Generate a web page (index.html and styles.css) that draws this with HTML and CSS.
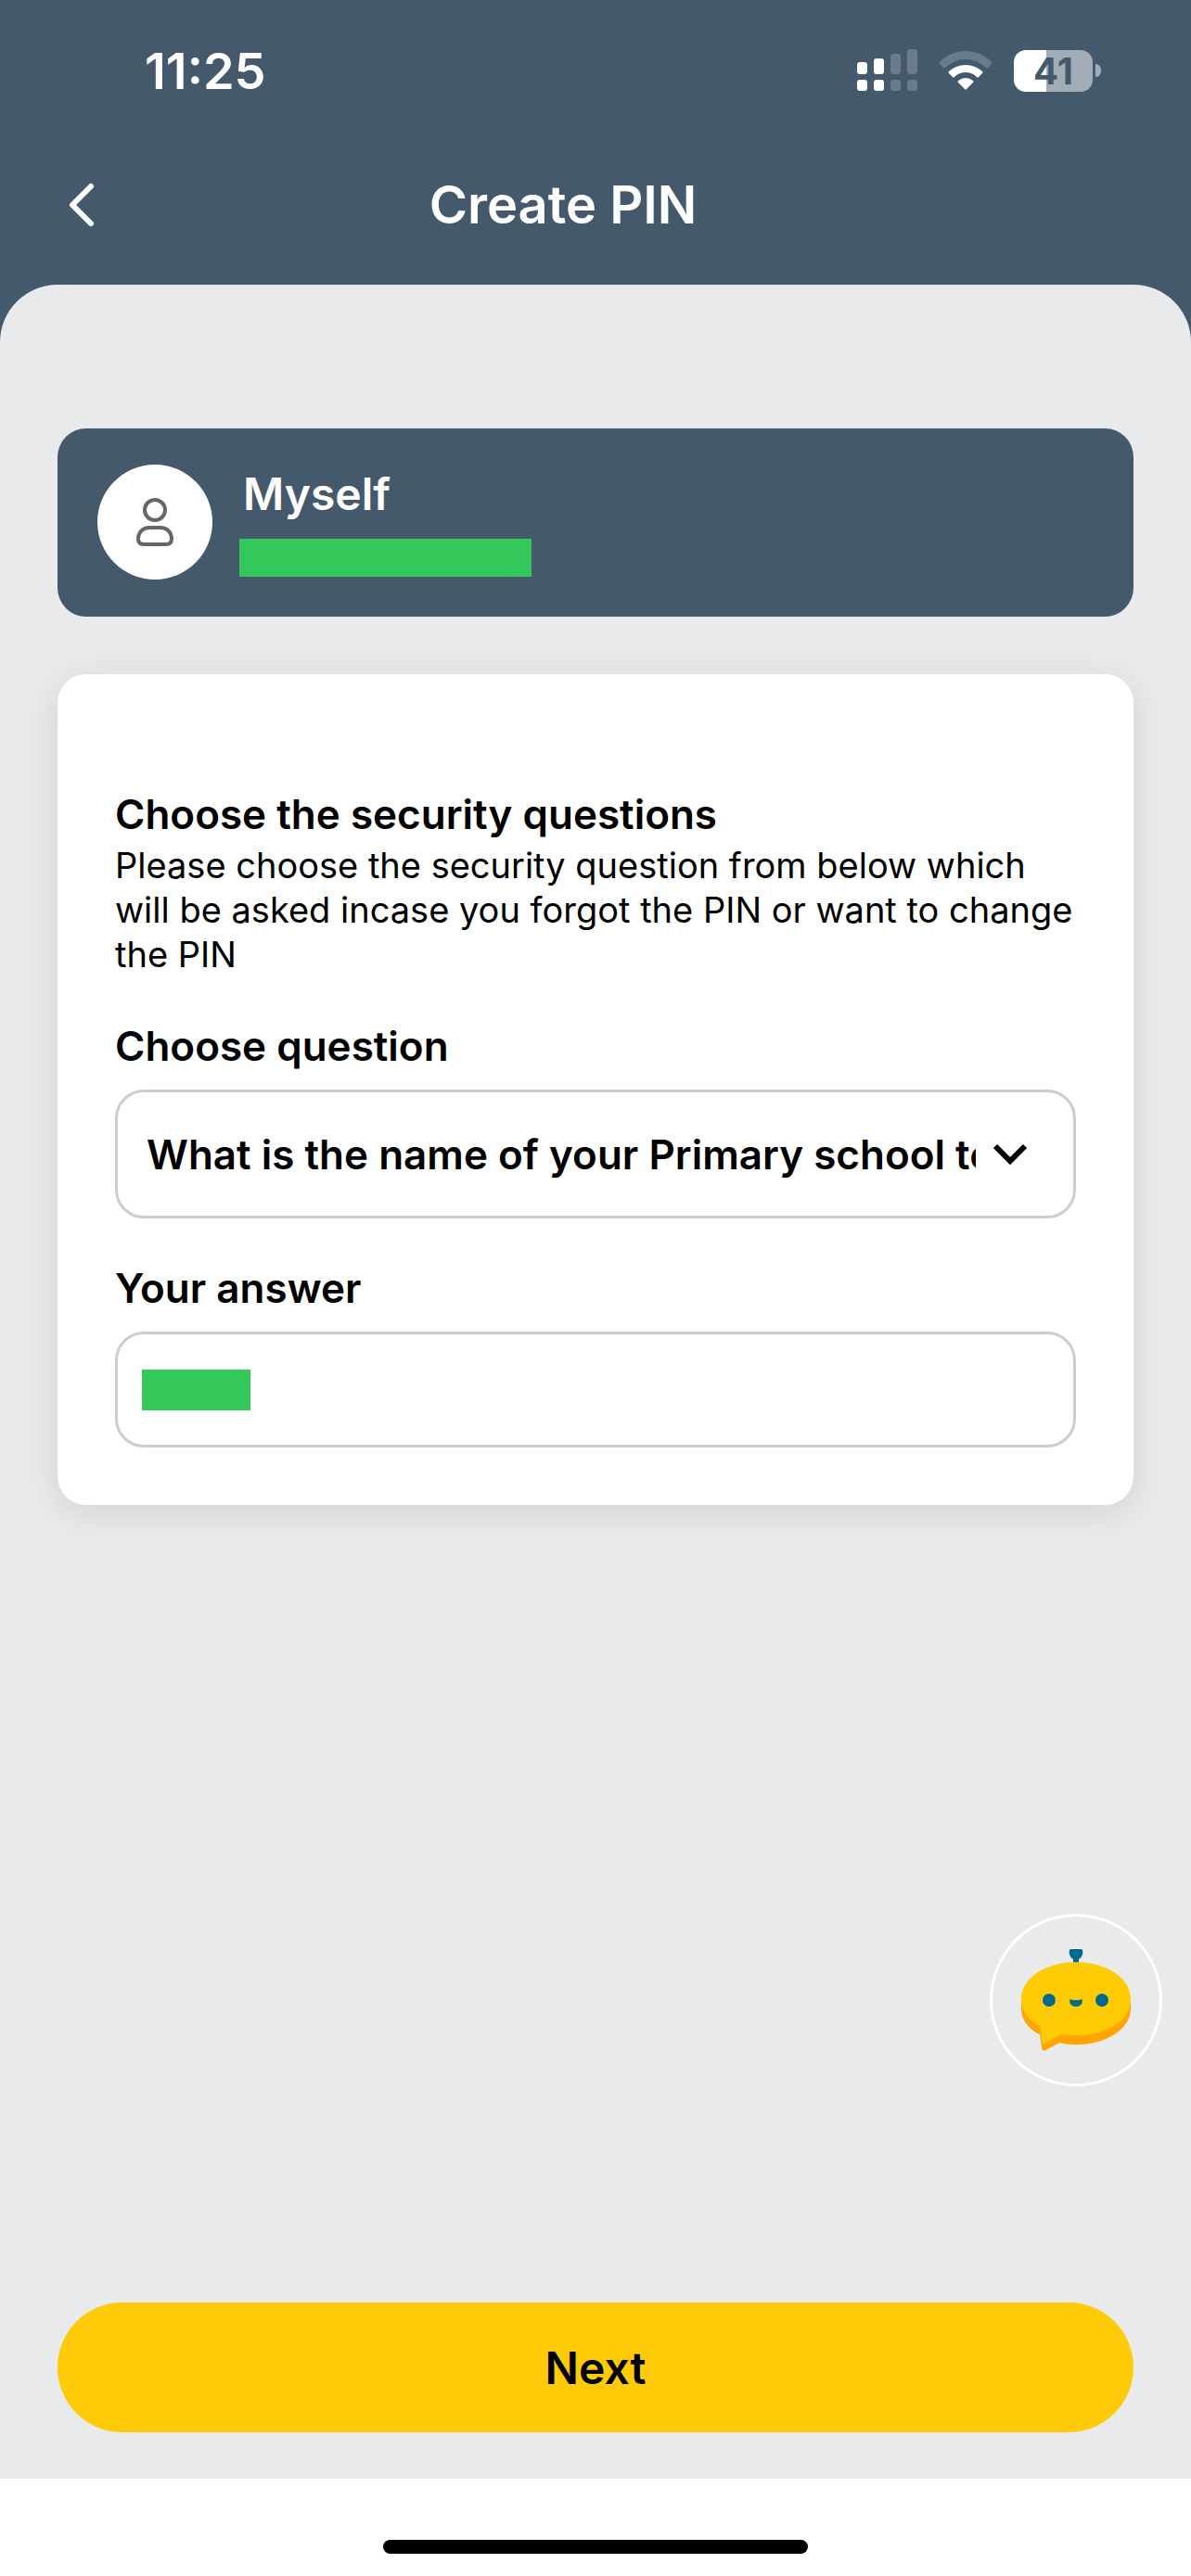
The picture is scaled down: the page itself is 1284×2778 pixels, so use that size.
FILE: index.html
```html
<!DOCTYPE html>
<html lang="en">
<head>
<meta charset="utf-8">
<meta name="viewport" content="width=device-width, initial-scale=1">
<title>Create PIN</title>
<link rel="stylesheet" href="styles.css">
</head>
<body>
<div class="app">
  <header class="top">
    <div class="status">
      <span class="status-time">11:25</span>
      <div class="status-icons">
        <svg class="signal" viewBox="0 0 65 46" aria-hidden="true">
          <g fill="#fff">
            <rect x="0" y="14" width="11" height="13" rx="3"/><rect x="0" y="33" width="11" height="12" rx="3"/>
            <rect x="18" y="10" width="11" height="17" rx="3"/><rect x="18" y="33" width="11" height="12" rx="3"/>
          </g>
          <g fill="#6a7b8c">
            <rect x="36" y="5" width="11" height="22" rx="3"/><rect x="36" y="33" width="11" height="12" rx="3"/>
            <rect x="54" y="0" width="11" height="27" rx="3"/><rect x="54" y="33" width="11" height="12" rx="3"/>
          </g>
        </svg>
        <svg class="wifi" viewBox="0 0 58 44" aria-hidden="true">
          <path fill="#6a7b8c" d="M1 13Q13 1 29 1T57 13Q58 14 57 15L53 19Q52 20 51 19Q41 10 29 10T7 19Q6 20 5 19L1 15Q0 14 1 13Z"/>
          <path fill="#fff" d="M11 23Q19 16 29 16T47 23Q48 24 47 25L43 29Q42 30 41 29Q36 24 29 24T17 29Q16 30 15 29L11 25Q10 24 11 23Z"/>
          <path fill="#fff" d="M21 33Q25 30 29 30T37 33Q38 34 37 35L30 42Q29 43 28 42L21 35Q20 34 21 33Z"/>
        </svg>
        <div class="battery">
          <span class="battery-body">41</span>
          <span class="battery-tip"></span>
        </div>
      </div>
    </div>
    <nav class="bar">
      <button class="back" type="button" aria-label="Back">
        <svg viewBox="0 0 28 48" aria-hidden="true"><path d="M24 4L4 24L24 44" fill="none" stroke="#fff" stroke-width="6" stroke-linecap="round" stroke-linejoin="round"/></svg>
      </button>
      <h1 class="title">Create PIN</h1>
    </nav>
  </header>

  <main class="panel">
    <section class="profile">
      <span class="avatar">
        <svg viewBox="0 0 40 54" aria-hidden="true"><g fill="none" stroke="#63666a" stroke-width="4"><circle cx="20" cy="14" r="11"/><path d="M14 33H26C33 33 38 38 38 45Q38 51 32 51H8Q2 51 2 45C2 38 7 33 14 33Z"/></g></svg>
      </span>
      <div class="profile-text">
        <h2 class="profile-name">Myself</h2>
        <span class="mask mask-number"></span>
      </div>
    </section>

    <form class="card" id="pin-form">
      <div class="intro">
        <h2 class="label">Choose the security questions</h2>
        <p class="hint">Please choose the security question from below which will be asked incase you forgot the PIN or want to change the PIN</p>
      </div>
      <div class="field">
        <label class="label" for="question">Choose question</label>
        <div class="control">
          <select class="box select" id="question">
            <option>What is the name of your Primary school teacher?</option>
          </select>
          <svg class="chevron" viewBox="0 0 38 24" aria-hidden="true"><path d="M3 3L19 19L35 3" fill="none" stroke="#000" stroke-width="6"/></svg>
        </div>
      </div>
      <div class="field">
        <label class="label" for="answer">Your answer</label>
        <div class="control">
          <input class="box input" id="answer" type="text">
          <span class="mask mask-answer"></span>
        </div>
      </div>
    </form>

    <button class="next" type="submit" form="pin-form">Next</button>
  </main>

  <footer class="home"><span class="home-bar"></span></footer>

  <button class="bot" type="button" aria-label="Chat assistant">
    <svg viewBox="0 0 118 110" aria-hidden="true">
      <path fill="#006a8e" d="M53 0H65Q67 1 66 6Q65 9 62 11V15H56V11Q53 9 52 6Q51 1 53 0Z"/>
      <path fill="#ffa400" d="M0 54H118V64C118 86 92 103 59 103Q49 103 41 101L26 109Q22 110 22 106L20 92C7 86 0 75 0 64Z"/>
      <path fill="#ffcb05" d="M59 14C92 14 118 31 118 54S92 93 59 93Q50 93 43 92L23 103L20 83C7 76 0 66 0 54C0 31 26 14 59 14Z"/>
      <g fill="#006a8e"><circle cx="30" cy="55" r="7"/><circle cx="87" cy="55" r="7"/><path d="M52 54Q59 56 66 54Q66 62 59 62T52 54Z"/></g>
    </svg>
  </button>
</div>
</body>
</html>
```
FILE: styles.css
```css
* { box-sizing: border-box; margin: 0; }

body {
  font-family: Inter, "Noto Sans", sans-serif;
  color: #000;
  background: #fff;
}

button, input, select { font: inherit; color: inherit; }

.app {
  min-height: 100vh;
  display: flex;
  flex-direction: column;
  background: #45596d;
}

.status {
  display: flex;
  justify-content: space-between;
  align-items: center;
  height: 152px;
  padding: 0 97px 0 156px;
  color: #fff;
}
.status-time { padding-top: 2px; font-size: 54px; line-height: 60px; font-weight: 600; }
.status-icons { display: flex; align-items: center; gap: 23px; }
.signal { width: 65px; height: 46px; }
.wifi { width: 58px; height: 44px; }
.battery { display: flex; align-items: center; gap: 3px; }
.battery-body {
  width: 85px;
  height: 45px;
  border-radius: 13px;
  background: linear-gradient(90deg, #fff 41%, #a2acb6 41%);
  color: #45596d;
  font-size: 40px;
  line-height: 45px;
  font-weight: 700;
  text-align: center;
}
.battery-tip { width: 6px; height: 14px; border-radius: 0 6px 6px 0; background: #a2acb6; }

.bar {
  display: grid;
  grid-template-columns: 76px 1fr 76px;
  align-items: center;
  height: 155px;
  padding: 0 132px 18px 62px;
}
.back {
  display: flex;
  padding: 0 12px;
  border: 0;
  background: none;
}
.back svg { width: 28px; height: 48px; }
.title { color: #fff; font-size: 56px; line-height: 64px; font-weight: 600; text-align: center; }

.panel {
  flex: 1;
  display: flex;
  flex-direction: column;
  gap: 62px;
  padding: 155px 62px 50px;
  border-radius: 62px 62px 0 0;
  background: #e8eaeb;
}

.profile {
  display: flex;
  align-items: center;
  gap: 29px;
  padding: 39px 43px 40px;
  border-radius: 31px;
  background: #45596d;
}
.avatar {
  display: flex;
  align-items: center;
  justify-content: center;
  width: 124px;
  height: 124px;
  border-radius: 50%;
  background: #fff;
}
.avatar svg { width: 40px; height: 54px; }
.profile-text { display: flex; flex-direction: column; gap: 20px; }
.profile-name { padding-left: 4px; color: #fff; font-size: 48px; line-height: 56px; font-weight: 600; }
.mask { display: block; background: #34c759; }
.mask-number { width: 315px; height: 41px; }

.card {
  display: flex;
  flex-direction: column;
  gap: 50px;
  padding: 126px 62px 62px;
  border-radius: 31px;
  background: #fff;
  box-shadow: 0 8px 40px rgba(0, 0, 0, 0.1);
}
.label { display: block; font-size: 44px; line-height: 50px; font-weight: 600; }
.intro { display: flex; flex-direction: column; gap: 6px; }
.hint { font-size: 38px; line-height: 48px; font-weight: 400; }
.field { display: flex; flex-direction: column; gap: 22px; }
.control { position: relative; display: flex; }
.box {
  width: 100%;
  border: 3px solid #cdcdcd;
  border-radius: 31px;
  background: #fff;
}
.select {
  appearance: none;
  height: 139px;
  padding: 0 105px 0 31px;
  font-size: 44px;
  font-weight: 600;
}
.chevron { position: absolute; right: 52px; top: 58px; width: 38px; height: 24px; pointer-events: none; }
.input { height: 125px; padding: 0 31px; font-size: 44px; }
.mask-answer { position: absolute; left: 29px; top: 41px; width: 117px; height: 44px; }

.next {
  height: 140px;
  margin-top: auto;
  border: 0;
  border-radius: 70px;
  background: #ffcb08;
  font-size: 48px;
  font-weight: 600;
}

.home {
  display: flex;
  justify-content: center;
  padding: 66px 0 24px;
  background: #fff;
}
.home-bar { width: 458px; height: 15px; border-radius: 8px; background: #000; }

.bot {
  position: fixed;
  right: 31px;
  bottom: 528px;
  display: flex;
  align-items: center;
  justify-content: center;
  width: 186px;
  height: 186px;
  padding: 0;
  border: 3px solid #fff;
  border-radius: 50%;
  background: none;
}
.bot svg { width: 118px; height: 110px; }
```
